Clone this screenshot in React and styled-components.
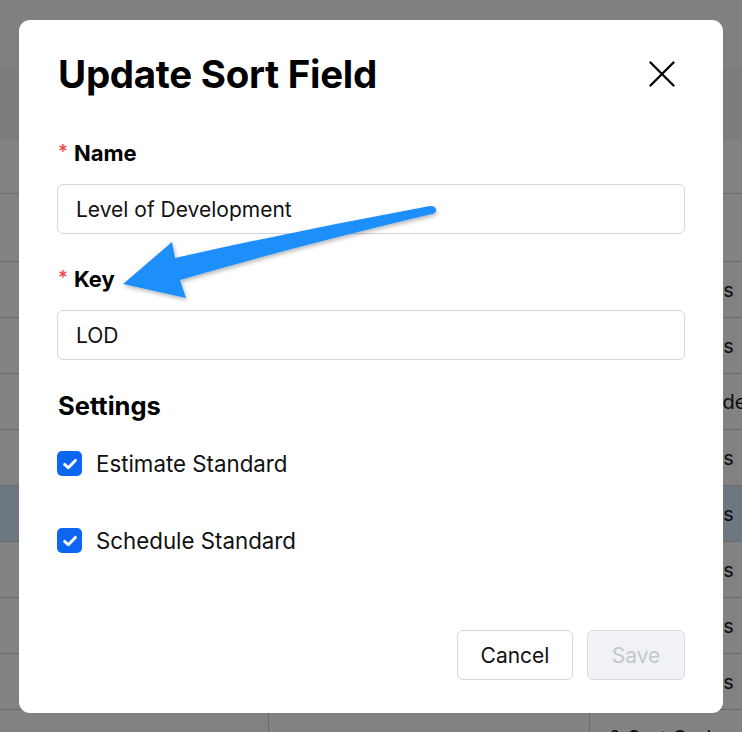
import React from "react";
import styled, { createGlobalStyle } from "styled-components";

const Global = createGlobalStyle`
  html, body { margin: 0; padding: 0; }
  body {
    width: 742px;
    height: 732px;
    overflow: hidden;
    font-family: Inter, "Noto Sans", Arial, sans-serif;
    background: #ffffff;
    color: #111;
  }
`;

const Page = styled.div`
  width: 742px;
  height: 732px;
  display: flex;
  flex-direction: column;
  background: #ffffff;
`;

const TopBar = styled.div`
  height: 68px;
  flex-shrink: 0;
  background: #fcfcfd;
`;

const Band = styled.div`
  height: 72px;
  flex-shrink: 0;
  background: #f3f3f6;
`;

const Row = styled.div`
  height: ${(p) => p.$h}px;
  flex-shrink: 0;
  display: grid;
  grid-template-columns: 268px 321px 1fr;
  border-bottom: 1px solid #d2d2d4;
  box-sizing: border-box;
  background: ${(p) => (p.$selected ? "#d6e9ff" : "#ffffff")};
`;

const Cell = styled.div`
  display: flex;
  align-items: center;
  padding-left: 19px;
  font-size: 20px;
  white-space: nowrap;
  overflow: hidden;
  color: #1a1a1a;
  border-left: ${(p) => (p.$first ? "none" : "1px solid #d2d2d4")};
`;

const Overlay = styled.div`
  position: fixed;
  inset: 0;
  background: rgba(0, 0, 0, 0.49);
`;

const Modal = styled.div`
  position: fixed;
  left: 19px;
  top: 20px;
  width: 704px;
  height: 693px;
  box-sizing: border-box;
  background: #ffffff;
  border-radius: 11px;
  padding: 32px 38px 33px 38px;
  display: flex;
  flex-direction: column;
`;

const Header = styled.div`
  display: flex;
  align-items: center;
  justify-content: space-between;
  height: 44px;
`;

const Title = styled.h1`
  margin: 0 0 0 1px;
  font-size: 38.5px;
  line-height: 44px;
  font-weight: 700;
  color: #000;
  letter-spacing: -0.3px;
`;

const CloseButton = styled.button`
  width: 32px;
  height: 32px;
  margin-right: 7px;
  border: none;
  background: none;
  padding: 0;
  display: flex;
  align-items: center;
  justify-content: center;
`;

const Field = styled.div`
  display: flex;
  flex-direction: column;
  margin-top: ${(p) => p.$mt}px;
`;

const Label = styled.label`
  display: flex;
  align-items: center;
  height: 28px;
  margin-bottom: 17px;
  margin-left: 1px;
  font-size: 22px;
  font-weight: 700;
  color: #000;
`;

const Required = styled.span`
  color: #f0434a;
  font-size: 19px;
  font-weight: 500;
  margin-right: 6px;
  align-self: flex-start;
  margin-top: 1px;
`;

const Input = styled.input`
  height: 50px;
  box-sizing: border-box;
  border: 1px solid #d3d7dd;
  border-radius: 6px;
  padding: 0 18px;
  font-family: Inter, "Noto Sans", Arial, sans-serif;
  font-size: 21px;
  color: #111;
  outline: none;
  background: #fff;
`;

const SectionTitle = styled.h2`
  margin: 31px 0 0 1px;
  font-size: 25.5px;
  line-height: 30px;
  font-weight: 700;
  color: #000;
`;

const CheckList = styled.div`
  display: flex;
  flex-direction: column;
  gap: 52px;
  margin-top: 30px;
`;

const CheckRow = styled.label`
  display: flex;
  align-items: center;
  gap: 14px;
  height: 25px;
  font-size: 22.3px;
  color: #111;
`;

const Box = styled.span`
  width: 25px;
  height: 25px;
  border-radius: 5px;
  background: #0d66f2;
  display: flex;
  align-items: center;
  justify-content: center;
  flex-shrink: 0;
`;

const Footer = styled.div`
  margin-top: auto;
  display: flex;
  justify-content: flex-end;
  gap: 14px;
`;

const Button = styled.button`
  height: 50px;
  width: ${(p) => p.$w}px;
  box-sizing: border-box;
  border-radius: 6px;
  font-family: Inter, "Noto Sans", Arial, sans-serif;
  font-size: 21px;
  border: 1px solid ${(p) => (p.$disabled ? "#d9dde3" : "#d3d7dd")};
  background: ${(p) => (p.$disabled ? "#f1f2f5" : "#ffffff")};
  color: ${(p) => (p.$disabled ? "#c3c7cd" : "#111")};
`;

const ArrowSvg = styled.svg`
  position: fixed;
  left: 0;
  top: 0;
  width: 742px;
  height: 732px;
  pointer-events: none;
`;

const rows = [
  { h: 54, c: ["", "", ""] },
  { h: 68, c: ["", "", ""] },
  { h: 56, c: ["", "", "Phase Codes"] },
  { h: 56, c: ["", "", "Phase Codes"] },
  { h: 56, c: ["", "", "Location Codes"] },
  { h: 56, c: ["", "", "Phase Codes"] },
  { h: 56, c: ["", "", "Phase Codes"], sel: true },
  { h: 56, c: ["", "", "Phase Codes"] },
  { h: 56, c: ["", "", "Phase Codes"] },
  { h: 56, c: ["", "", "Phase Codes"] },
  { h: 56, c: ["", "", "& Sort Codes"] },
];

function Check() {
  return (
    <svg width="18" height="18" viewBox="0 0 18 18">
      <path d="M3.6 9.4 L7.3 12.8 L14.4 5.4" fill="none" stroke="#fff" strokeWidth="2.9" strokeLinecap="round" strokeLinejoin="round" />
    </svg>
  );
}

export default function App() {
  return (
    <>
      <Global />
      <Page>
        <TopBar />
        <Band />
        {rows.map((r, i) => (
          <Row key={i} $h={r.h} $selected={r.sel}>
            <Cell $first>{r.c[0]}</Cell>
            <Cell>{r.c[1]}</Cell>
            <Cell>{r.c[2]}</Cell>
          </Row>
        ))}
      </Page>
      <Overlay />
      <Modal>
        <Header>
          <Title>Update Sort Field</Title>
          <CloseButton aria-label="Close">
            <svg width="26" height="26" viewBox="0 0 26 26">
              <path d="M1.5 1.5 L24.5 24.5 M24.5 1.5 L1.5 24.5" stroke="#000" strokeWidth="2.3" strokeLinecap="round" />
            </svg>
          </CloseButton>
        </Header>
        <Field $mt={43}>
          <Label><Required>*</Required>Name</Label>
          <Input defaultValue="Level of Development" />
        </Field>
        <Field $mt={31}>
          <Label><Required>*</Required>Key</Label>
          <Input defaultValue="LOD" />
        </Field>
        <SectionTitle>Settings</SectionTitle>
        <CheckList>
          <CheckRow><Box><Check /></Box>Estimate Standard</CheckRow>
          <CheckRow><Box><Check /></Box>Schedule Standard</CheckRow>
        </CheckList>
        <Footer>
          <Button $w={116}>Cancel</Button>
          <Button $w={98} $disabled disabled>Save</Button>
        </Footer>
      </Modal>
      <ArrowSvg viewBox="0 0 742 732">
        <defs>
          <filter id="sh" x="-10%" y="-30%" width="120%" height="160%">
            <feDropShadow dx="1" dy="2" stdDeviation="2" floodColor="#000" floodOpacity="0.3" />
          </filter>
        </defs>
        <path
          d="M123 284 L172 242 L175 258 Q300 230 430 206 Q436 206 436 210 Q436 213 432 214 Q300 245 180 280 L186 298 Z"
          fill="#1f8ffb"
          filter="url(#sh)"
        />
      </ArrowSvg>
    </>
  );
}
